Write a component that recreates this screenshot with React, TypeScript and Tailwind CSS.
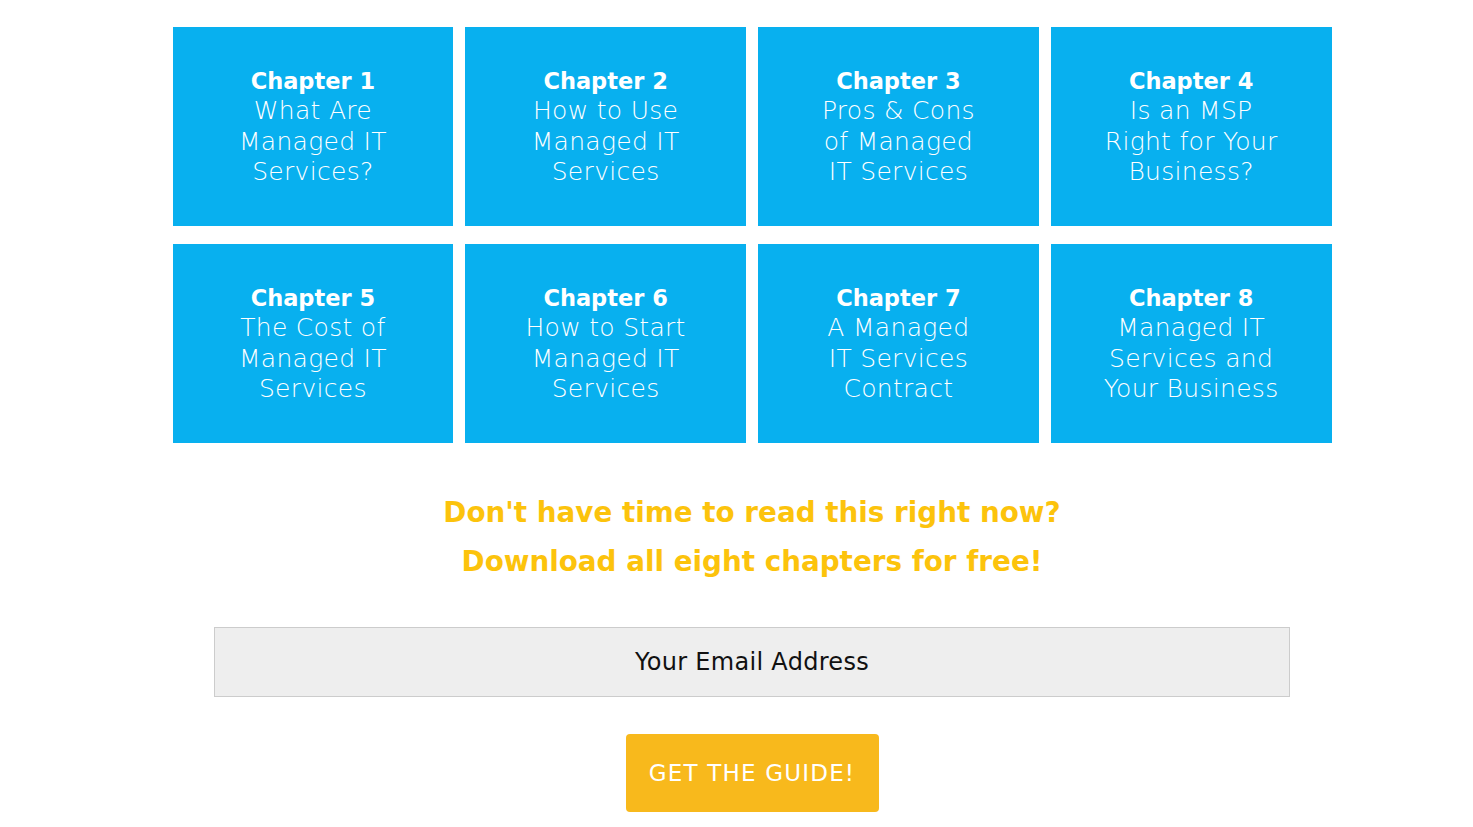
import React from "react";

const chapters = [
  { n: 1, lines: ["What Are", "Managed IT", "Services?"] },
  { n: 2, lines: ["How to Use", "Managed IT", "Services"] },
  { n: 3, lines: ["Pros & Cons", "of Managed", "IT Services"] },
  { n: 4, lines: ["Is an MSP", "Right for Your", "Business?"] },
  { n: 5, lines: ["The Cost of", "Managed IT", "Services"] },
  { n: 6, lines: ["How to Start", "Managed IT", "Services"] },
  { n: 7, lines: ["A Managed", "IT Services", "Contract"] },
  { n: 8, lines: ["Managed IT", "Services and", "Your Business"] },
];

export default function App() {
  return (
    <div
      className="min-h-[827px] w-full bg-white flex justify-center pl-[31px]"
      style={{ fontFamily: '"DejaVu Sans", "Liberation Sans", sans-serif' }}
    >
      <div className="w-[1159px] pt-[27px] flex flex-col items-center">
        <div className="grid grid-cols-4 gap-x-[12px] gap-y-[18px] w-full">
          {chapters.map((c) => (
            <div
              key={c.n}
              className="h-[199px] bg-[#08b0ef] flex flex-col items-center justify-center text-white text-center leading-[30.5px]"
            >
              <div className="font-bold text-[22.5px]">Chapter {c.n}</div>
              {c.lines.map((l) => (
                <div key={l} className="font-light text-[25px] tracking-[0.3px]">{l}</div>
              ))}
            </div>
          ))}
        </div>
        <div className="mt-[45px] text-center text-[#fcc30c] font-bold text-[27.8px] leading-[49px]">
          <div>Don't have time to read this right now?</div>
          <div>Download all eight chapters for free!</div>
        </div>
        <div className="mt-[41px] w-[1076px] h-[70px] bg-[#eeeeee] border border-[#cccccc] flex items-center justify-center text-[24px] text-[#111111] tracking-[0.3px]">
          Your Email Address
        </div>
        <button className="mt-[37px] w-[253px] h-[78px] rounded-[4px] bg-[#f8b91c] text-white text-[23px] tracking-[1.2px] font-normal">
          GET THE GUIDE!
        </button>
      </div>
    </div>
  );
}
